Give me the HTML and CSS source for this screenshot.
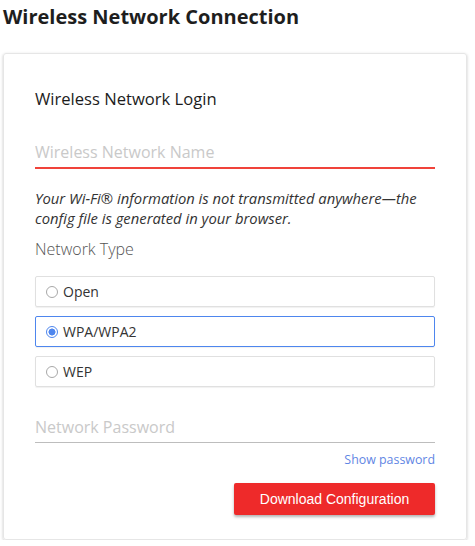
FILE: index.html
```html
<!DOCTYPE html>
<html>
<head>
<meta charset="utf-8">
<link rel="stylesheet" href="styles.css">
</head>
<body>
<div class="page">
  <h1 class="title">Wireless Network Connection</h1>
  <div class="card">
    <h2 class="card-title">Wireless Network Login</h2>
    <input class="field field-active" type="text" placeholder="Wireless Network Name">
    <p class="note">Your Wi-Fi® information is not transmitted anywhere—the config file is generated in your browser.</p>
    <div class="label">Network Type</div>
    <div class="options">
      <div class="option"><span class="radio"></span><span>Open</span></div>
      <div class="option option-selected"><span class="radio radio-on"></span><span>WPA/WPA2</span></div>
      <div class="option"><span class="radio"></span><span>WEP</span></div>
    </div>
    <input class="field field-pass" type="password" placeholder="Network Password">
    <div class="show-row"><span class="show-link">Show password</span></div>
    <div class="actions"><button class="btn">Download Configuration</button></div>
  </div>
</div>
</body>
</html>
```

FILE: styles.css
```css
* { box-sizing: border-box; }
html, body { margin: 0; padding: 0; background: #fff; }
body { font-family: "Open Sans", sans-serif; color: #222; }
.page { padding-left: 3px; }
.title {
  margin: 5px 0 0;
  font-size: 20px;
  line-height: 24px;
  font-weight: 700;
  color: #1e1e1e;
}
.card {
  margin-top: 24px;
  width: 464px;
  border: 1px solid #e6e6e6;
  border-radius: 3px;
  box-shadow: 0 1px 3px rgba(0,0,0,0.22);
  padding: 34px 31px 24px;
}
.card-title {
  margin: 0;
  font-size: 16.6px;
  line-height: 22px;
  font-weight: 400;
  color: #1c1c1c;
}
.field {
  display: block;
  width: 100%;
  height: 32px;
  border: none;
  border-bottom: 1px solid #bdbdbd;
  outline: none;
  padding: 0;
  font-family: "Open Sans", sans-serif;
  font-size: 16px;
  color: #333;
  background: transparent;
}
.field::placeholder { color: #c9c9c9; }
.field-active {
  margin-top: 27px;
  border-bottom: 2px solid #f0433a;
}
.note {
  margin: 19px 0 0;
  font-size: 14.8px;
  line-height: 20px;
  font-style: italic;
  color: #333;
}
.label {
  margin-top: 10px;
  font-size: 16px;
  line-height: 22px;
  font-weight: 300;
  color: #555;
}
.options {
  margin-top: 16px;
  display: flex;
  flex-direction: column;
  gap: 9px;
}
.option {
  height: 31px;
  border: 1px solid #e0e0e0;
  border-radius: 2px;
  box-shadow: 0 1px 1px rgba(0,0,0,0.06);
  display: flex;
  align-items: center;
  gap: 5px;
  padding-left: 10px;
  font-size: 14px;
  color: #333;
}
.option-selected { border-color: #4e86ee; }
.radio {
  width: 12px;
  height: 12px;
  border-radius: 50%;
  border: 1px solid #a8a8a8;
  background: #fff;
  flex: none;
}
.radio-on {
  border-color: #4e86ee;
  background: radial-gradient(circle, #4e86ee 0 3.2px, #fff 3.8px);
}
.field-pass { margin-top: 24px; }
.show-row {
  margin-top: 8px;
  display: flex;
  justify-content: flex-end;
}
.show-link {
  font-size: 12.4px;
  line-height: 18px;
  color: #5f86e4;
}
.actions {
  margin-top: 14px;
  display: flex;
  justify-content: flex-end;
}
.btn {
  width: 201px;
  height: 32px;
  border: none;
  border-radius: 2px;
  background: #ee2a2a;
  color: #fff;
  font-family: "Liberation Sans", Arial, sans-serif;
  font-size: 14px;
  box-shadow: 0 2px 3px rgba(0,0,0,0.3);
  padding: 0;
}
```
